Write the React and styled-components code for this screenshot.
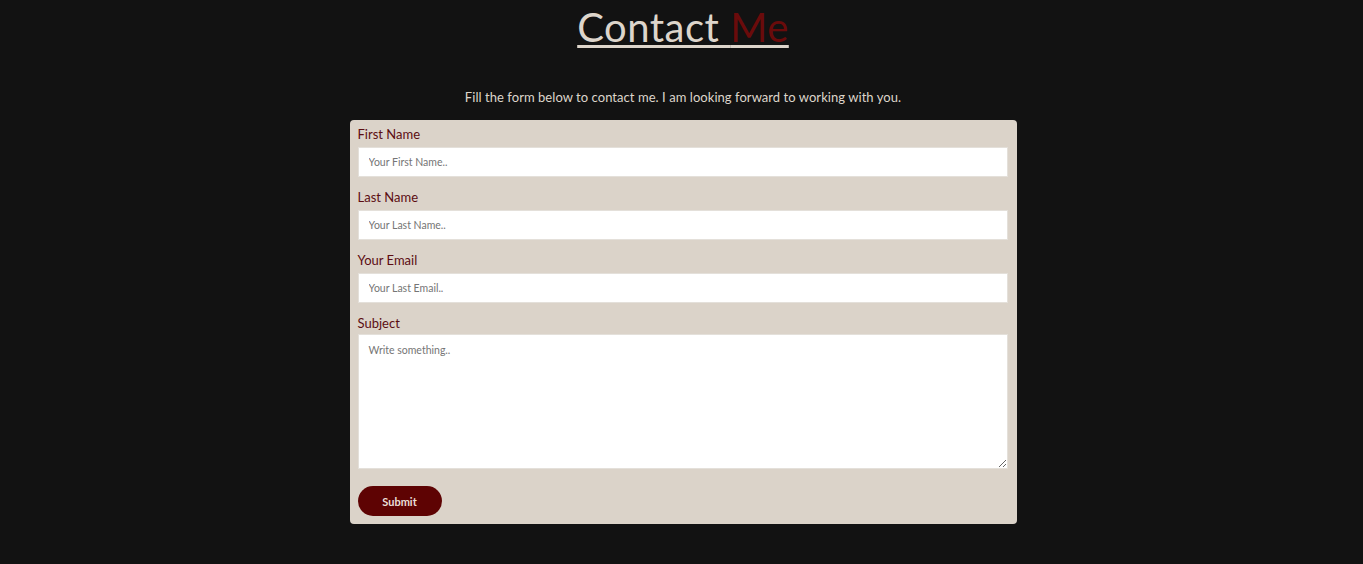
import React from 'react';
import styled, { createGlobalStyle } from 'styled-components';

const GlobalStyle = createGlobalStyle`
  body {
    margin: 0;
    background-color: #121212;
    font-family: Lato, "Liberation Sans", sans-serif;
  }
`;

const Page = styled.div`
  display: flex;
  flex-direction: column;
  align-items: center;
  min-height: 564px;
  padding-left: 3px;
`;

const Title = styled.h1`
  margin: 0;
  padding-top: 3px;
  font-size: 40px;
  font-weight: 400;
  line-height: 48px;
  color: #ddd5cb;
  text-decoration: underline;
  text-decoration-thickness: 3px;
  text-underline-offset: 3px;
  letter-spacing: 0.5px;

  span {
    color: #6a0b0b;
  }
`;

const Intro = styled.p`
  margin: 37px 0 0;
  font-size: 13px;
  line-height: 18px;
  color: #ddd5cb;
  letter-spacing: 0.05px;
`;

const Form = styled.form`
  width: 650px;
  margin-top: 14px;
  padding: 5px 9px 8px 8px;
  background-color: #dbd3c9;
  border-radius: 4px;
  display: flex;
  flex-direction: column;
`;

const Label = styled.label`
  display: block;
  font-size: 13px;
  line-height: 18px;
  color: #5c0d12;
  margin-bottom: ${(p) => (p.$tight ? '2px' : '4px')};
`;

const Input = styled.input`
  box-sizing: border-box;
  width: 100%;
  height: 30px;
  margin: 0 0 11px;
  padding: 0 10px;
  border: 1px solid #e4e0da;
  background: #fff;
  font-family: inherit;
  font-size: 10.5px;
  outline: none;

  &::placeholder {
    color: #757575;
  }
`;

const TextArea = styled.textarea`
  box-sizing: border-box;
  width: 100%;
  height: 135px;
  margin: 0;
  padding: 9px 10px;
  border: 1px solid #e4e0da;
  background: #fff;
  font-family: inherit;
  font-size: 10.5px;
  outline: none;
  resize: vertical;

  &::placeholder {
    color: #757575;
  }
`;

const SubmitButton = styled.button`
  align-self: flex-start;
  margin-top: 17px;
  width: 84px;
  height: 30px;
  border: none;
  border-radius: 15px;
  background-color: #5e0303;
  color: #eadfd8;
  font-family: inherit;
  font-size: 11px;
  font-weight: 700;
  cursor: pointer;
`;

const fields = [
    { id: 'fname', label: 'First Name', placeholder: 'Your First Name..' },
    { id: 'lname', label: 'Last Name', placeholder: 'Your Last Name..' },
    { id: 'email', label: 'Your Email', placeholder: 'Your Last Email..' },
];

const App = () => {
    return (
        <Page>
            <GlobalStyle />
            <Title>Contact <span>Me</span></Title>
            <Intro>Fill the form below to contact me. I am looking forward to working with you.</Intro>
            <Form onSubmit={(e) => e.preventDefault()}>
                {fields.map((f) => (
                    <div key={f.id}>
                        <Label htmlFor={f.id}>{f.label}</Label>
                        <Input id={f.id} type="text" placeholder={f.placeholder} />
                    </div>
                ))}
                <Label htmlFor="subject" $tight>Subject</Label>
                <TextArea id="subject" placeholder="Write something.." />
                <SubmitButton type="submit">Submit</SubmitButton>
            </Form>
        </Page>
    );
};

export default App;
